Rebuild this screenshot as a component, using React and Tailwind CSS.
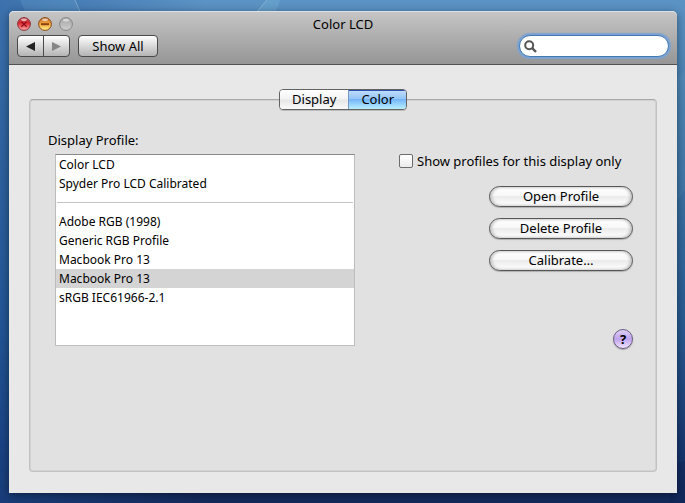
import { useState } from 'react'

const PROFILE_GROUPS = [
  [
    { id: 'color-lcd', name: 'Color LCD' },
    { id: 'spyder', name: 'Spyder Pro LCD Calibrated' },
  ],
  [
    { id: 'adobe', name: 'Adobe RGB (1998)' },
    { id: 'generic', name: 'Generic RGB Profile' },
    { id: 'mbp-a', name: 'Macbook Pro 13' },
    { id: 'mbp-b', name: 'Macbook Pro 13' },
    { id: 'srgb', name: 'sRGB IEC61966-2.1' },
  ],
]

function Wallpaper() {
  return (
    <svg
      className="absolute inset-0 h-full w-full"
      viewBox="0 0 685 503"
      preserveAspectRatio="none"
      aria-hidden="true"
    >
      <defs>
        <linearGradient id="sky" x1="0" y1="0" x2="0" y2="1">
          <stop offset="0" stopColor="#5b93c4" />
          <stop offset="0.25" stopColor="#437aaa" />
          <stop offset="0.65" stopColor="#275a92" />
          <stop offset="0.9" stopColor="#17356e" />
          <stop offset="1" stopColor="#142a5c" />
        </linearGradient>
        <linearGradient id="edge" x1="0" y1="0" x2="1" y2="0">
          <stop offset="0" stopColor="#1d4f96" stopOpacity="0.5" />
          <stop offset="0.3" stopColor="#1d4f96" stopOpacity="0" />
        </linearGradient>
      </defs>
      <rect width="685" height="503" fill="url(#sky)" />
      <rect width="685" height="503" fill="url(#edge)" />
      <path d="M20 0 H75 L81 14 H26 Z" fill="#6ba6d0" fillOpacity="0.25" />
      <path d="M267 0 H280 Q279 6 275 12 H256 Z" fill="#7db8da" fillOpacity="0.3" />
      <path d="M75 0 L81 14 M267 0 L255 14" stroke="#a9cbe6" strokeOpacity="0.5" />
      <path d="M670 82 L685 70 V190 L670 210 Z" fill="#6aa3cf" fillOpacity="0.12" />
      <path d="M670 466 L685 461 V503 H670 Z" fill="#0d2053" fillOpacity="0.3" />
    </svg>
  )
}

function TrafficLights() {
  return (
    <div className="flex gap-[7px]">
      <button aria-label="Close" className="h-[14px] w-[14px]">
        <svg viewBox="0 0 14 14">
          <defs>
            <linearGradient id="red" x1="0" y1="0" x2="0" y2="1">
              <stop offset="0" stopColor="#b8444a" />
              <stop offset="0.45" stopColor="#df2a33" />
              <stop offset="1" stopColor="#ffb0b0" />
            </linearGradient>
          </defs>
          <circle cx="7" cy="7" r="6.4" fill="url(#red)" stroke="#8a3034" strokeWidth="1" />
          <ellipse cx="7" cy="2.8" rx="3" ry="1.4" fill="#fff" fillOpacity="0.6" />
          <path d="M4.4 4.6 L9.6 9.8 M9.6 4.6 L4.4 9.8" stroke="#8f0f18" strokeWidth="1.3" />
        </svg>
      </button>
      <button aria-label="Minimize" className="h-[14px] w-[14px]">
        <svg viewBox="0 0 14 14">
          <defs>
            <linearGradient id="amber" x1="0" y1="0" x2="0" y2="1">
              <stop offset="0" stopColor="#b9682c" />
              <stop offset="0.45" stopColor="#f0a13a" />
              <stop offset="1" stopColor="#fff28c" />
            </linearGradient>
          </defs>
          <circle cx="7" cy="7" r="6.4" fill="url(#amber)" stroke="#8a4a1c" strokeWidth="1" />
          <ellipse cx="7" cy="2.8" rx="3" ry="1.4" fill="#fff" fillOpacity="0.6" />
          <path d="M3 7.2 H11" stroke="#8c4310" strokeWidth="2" />
        </svg>
      </button>
      <button aria-label="Zoom" disabled className="h-[14px] w-[14px]">
        <svg viewBox="0 0 14 14">
          <defs>
            <linearGradient id="grey" x1="0" y1="0" x2="0" y2="1">
              <stop offset="0" stopColor="#a4a4a4" />
              <stop offset="1" stopColor="#d0d0d0" />
            </linearGradient>
          </defs>
          <circle cx="7" cy="7" r="6.4" fill="url(#grey)" stroke="#858585" strokeWidth="1" />
          <ellipse cx="7" cy="3" rx="3" ry="1.6" fill="#fff" fillOpacity="0.5" />
        </svg>
      </button>
    </div>
  )
}

function TitleBar() {
  return (
    <header className="rounded-t-[5px] border-t border-t-[#d9e2ea] border-b border-b-[#515151] bg-linear-to-b from-[#c5c5c5] to-[#969696] px-2">
      <div className="grid h-[23px] grid-cols-[1fr_auto_1fr] items-center">
        <TrafficLights />
        <h1 className="text-[13px] leading-5">Color LCD</h1>
      </div>
      <div className="flex items-center gap-2 pb-[7px]">
        <div className="flex h-[22px] rounded-[4px] border border-[#4a4a4a] bg-linear-to-b from-white to-[#b4b4b4]">
          <button aria-label="Back" className="flex w-[26px] items-center justify-center border-r border-[#4a4a4a]">
            <svg width="9" height="9" viewBox="0 0 9 9">
              <path d="M0 4.5 L9 0 V9 Z" fill="#222" />
            </svg>
          </button>
          <button aria-label="Forward" disabled className="flex w-[25px] items-center justify-center">
            <svg width="9" height="9" viewBox="0 0 9 9">
              <path d="M9 4.5 L0 0 V9 Z" fill="#858585" />
            </svg>
          </button>
        </div>
        <button className="h-[22px] w-20 rounded-[4px] border border-[#4a4a4a] bg-linear-to-b from-white to-[#b4b4b4] text-[13px] leading-5">
          Show All
        </button>
        <label className="ml-auto flex h-[22px] w-[150px] items-center rounded-full border border-[#4577b3] bg-white pl-1 shadow-[0_0_1px_2px_#7aa3d2]">
          <svg width="13" height="13" viewBox="0 0 13 13" aria-hidden="true">
            <circle cx="5.2" cy="5.2" r="4" fill="none" stroke="#555" strokeWidth="2" />
            <path d="M8.2 8.2 L12 12" stroke="#555" strokeWidth="2.4" />
          </svg>
          <input type="search" aria-label="Search" className="min-w-0 flex-1 bg-transparent px-1 text-[13px] outline-none" />
        </label>
      </div>
    </header>
  )
}

function Tabs({ active, onChange }) {
  const on = 'bg-[linear-gradient(#c4defa_0%,#95c6f8_45%,#75b5f8_50%,#b8f0ff_100%)]'
  const off = 'bg-[linear-gradient(#ffffff_0%,#f3f3f3_48%,#e6e6e6_52%,#fafafa_100%)]'
  return (
    <div
      role="tablist"
      className="relative mx-auto flex h-[21px] w-32 overflow-hidden rounded-[4px] border border-[#626262] text-[13px] leading-[19px] shadow-[0_1px_0_#bcbcbc]"
    >
      <button
        role="tab"
        aria-selected={active === 'Display'}
        onClick={() => onChange('Display')}
        className={`flex-[69] border-r border-r-[#7a97c4] ${active === 'Display' ? on : off}`}
      >
        Display
      </button>
      <button
        role="tab"
        aria-selected={active === 'Color'}
        onClick={() => onChange('Color')}
        className={`flex-[57] ${active === 'Color' ? `${on} shadow-[inset_0_1px_0_#2f4fae]` : off}`}
      >
        Color
      </button>
    </div>
  )
}

function ProfileList({ selected, onSelect }) {
  return (
    <div
      role="listbox"
      aria-labelledby="profile-label"
      className="ml-[7px] h-48 overflow-hidden border border-[#bdbdbd] border-t-[#8a8a8a] bg-white text-[12px]"
    >
      {PROFILE_GROUPS.map((group, i) => (
        <div key={i} role="group">
          {i > 0 && <hr className="mx-[1px] my-[9px] border-[#c4c4c4]" />}
          {group.map((profile) => (
            <button
              key={profile.id}
              role="option"
              aria-selected={profile.id === selected}
              onClick={() => onSelect(profile.id)}
              className={`block h-[19px] w-full px-[3px] text-left leading-[19px] ${
                profile.id === selected ? 'bg-[#d4d4d4]' : ''
              }`}
            >
              {profile.name}
            </button>
          ))}
        </div>
      ))}
    </div>
  )
}

function PushButton({ children }) {
  return (
    <button className="h-[21px] w-36 rounded-full border border-[#565656] bg-[linear-gradient(#ffffff_0%,#f8f8f8_45%,#ebebeb_50%,#ffffff_100%)] text-[13px] leading-[19px] shadow-[0_1px_1px_#b0b0b0,inset_2px_0_3px_#c4c4c4,inset_-2px_0_3px_#c4c4c4]">
      {children}
    </button>
  )
}

export default function App() {
  const [tab, setTab] = useState('Color')
  const [selected, setSelected] = useState('mbp-b')

  return (
    <div className="relative flex min-h-screen flex-col pt-[11px] pr-2 pb-[10px] pl-[9px] font-['Noto_Sans',sans-serif] text-black">
      <Wallpaper />
      <div className="relative flex flex-1 flex-col rounded-t-[5px] bg-[#e8e8e8] shadow-[0_2px_8px_rgba(0,0,0,0.45)]">
        <TitleBar />
        <main className="flex flex-1 flex-col px-5 pt-6 pb-[21px]">
          <Tabs active={tab} onChange={setTab} />
          <section className="-mt-[11px] flex flex-1 gap-11 rounded-[4px] border border-[#c2c2c2] border-t-[#a8a8a8] bg-[#e1e1e1] pr-[23px] pb-6 pl-[18px] shadow-[inset_0_0_0_1px_#d2d2d2]">
            <div className="min-w-0 flex-1 pt-[30px]">
              <h2 id="profile-label" className="mb-1 text-[13px] leading-5">
                Display Profile:
              </h2>
              <ProfileList selected={selected} onSelect={setSelected} />
            </div>
            <div className="flex w-[234px] shrink-0 flex-col items-end pt-[51px]">
              <label className="flex w-full items-center gap-1 text-[13px] leading-5 whitespace-nowrap">
                <input
                  type="checkbox"
                  className="h-[14px] w-[14px] appearance-none rounded-[2px] border border-[#6c6c6c] bg-linear-to-b from-white to-[#ececec] checked:from-[#c4defa] checked:to-[#75b5f8]"
                />
                Show profiles for this display only
              </label>
              <div className="mt-[15px] flex flex-col gap-[11px]">
                <PushButton>Open Profile</PushButton>
                <PushButton>Delete Profile</PushButton>
                <PushButton>Calibrate…</PushButton>
              </div>
              <button
                aria-label="Help"
                className="mt-[58px] h-5 w-5 rounded-full border border-[#6b5c80] bg-[linear-gradient(#ddd0f5_0%,#bfa3ee_50%,#efe2ff_100%)] text-[13px] leading-[18px] font-bold shadow-[0_1px_1px_#a0a0a0]"
              >
                ?
              </button>
            </div>
          </section>
        </main>
      </div>
    </div>
  )
}
